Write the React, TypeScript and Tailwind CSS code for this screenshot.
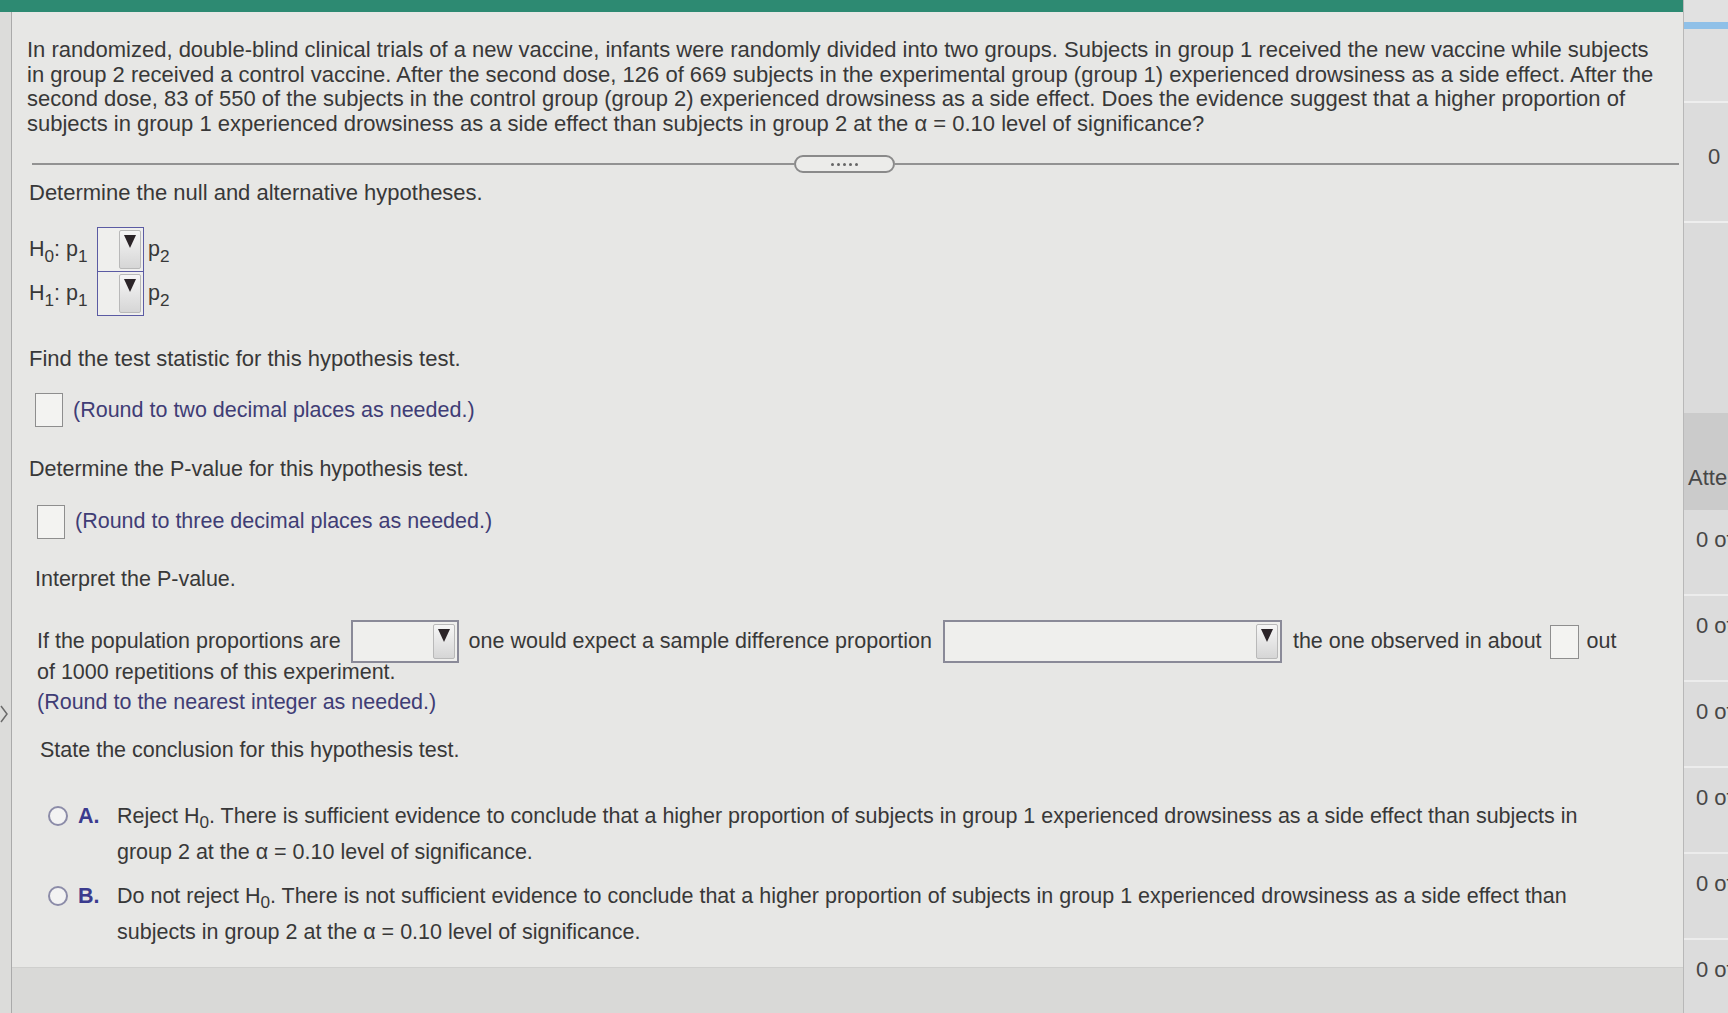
const font = "font-['Liberation_Sans',Arial,sans-serif]";

function Caret() {
  return (
    <svg width="12" height="13" viewBox="0 0 12 13" className="block">
      <polygon points="0,0 12,0 6,13" fill="#2b2428" />
    </svg>
  );
}

function Dropdown({ width, height, border }: { width: string; height: string; border: string }) {
  return (
    <div className={`${width} ${height} ${border} flex justify-end items-stretch bg-[#efefed] p-[2px] shrink-0`}>
      <div className="w-[22px] flex justify-center pt-[4px] bg-gradient-to-b from-[#f6f6f6] to-[#d6d6d6] border border-[#b9b9b9] rounded-[2px]">
        <Caret />
      </div>
    </div>
  );
}

function AnswerBox({ className = '' }: { className?: string }) {
  return <div className={`w-[28px] h-[34px] border border-[#8e8e8e] bg-[#f3f3f1] shrink-0 ${className}`} />;
}

function Option({ letter, children }: { letter: string; children: React.ReactNode }) {
  return (
    <div className="flex items-start">
      <div className="h-[36px] flex items-center">
        <div className="w-[20px] h-[20px] rounded-full border-2 border-[#8c8ca8] bg-[#f3f3f3]" />
      </div>
      <div className="w-[39px] ml-[10px] font-bold text-[#3b3b8e] leading-[36px]">{letter}.</div>
      <div className="w-[1490px] leading-[36px]">{children}</div>
    </div>
  );
}

const Sub = ({ children }: { children: React.ReactNode }) => (
  <sub className="text-[80%] -bottom-[0.3em]">{children}</sub>
);

const H0 = () => (
  <>
    H<Sub>0</Sub>
  </>
);

const sideRows = ['0 of 1', '0 of 1', '0 of 1', '0 of 1', '0 of 1', '0 of 1'];

export default function App() {
  return (
    <div className={`w-[1728px] h-[1013px] flex overflow-hidden bg-[#e7e7e5] text-[#383838] text-[21.5px] ${font}`}>
      {/* question panel */}
      <div className="w-[1684px] flex flex-col border-r border-[#b8b8b8]">
        <div className="h-[12px] bg-[#2d8a72] shrink-0" />
        <div className="flex flex-1 relative">
          <div className="w-[12px] bg-[#dcdcda] border-r border-[#aaaaaa] shrink-0" />
          <svg className="absolute left-[0px] top-[692px]" width="8" height="20" viewBox="0 0 8 20">
            <polyline points="1,2 7,10 1,18" fill="none" stroke="#6b6b6b" strokeWidth="1.5" />
          </svg>

          <div className="flex-1 flex flex-col">
            <p className="pt-[26px] pl-[15px] text-[22px] leading-[24.5px] whitespace-nowrap">
              In randomized, double-blind clinical trials of a new vaccine, infants were randomly divided into two
              groups. Subjects in group 1 received the new vaccine while subjects
              <br />
              in group 2 received a control vaccine. After the second dose, 126 of 669 subjects in the experimental
              group (group 1) experienced drowsiness as a side effect. After the
              <br />
              second dose, 83 of 550 of the subjects in the control group (group 2) experienced drowsiness as a side
              effect. Does the evidence suggest that a higher proportion of
              <br />
              subjects in group 1 experienced drowsiness as a side effect than subjects in group 2 at the α = 0.10
              level of significance?
            </p>

            <div className="mt-[19px] ml-[20px] mr-[4px] h-[18px] flex items-center">
              <div className="w-[762px] border-t-2 border-[#929292]" />
              <div className="w-[101px] h-[18px] rounded-full border-2 border-[#8a8a8a] bg-[#ececea] flex items-center justify-center gap-[3px]">
                <span className="w-[3px] h-[3px] rounded-full bg-[#666]" />
                <span className="w-[3px] h-[3px] rounded-full bg-[#666]" />
                <span className="w-[3px] h-[3px] rounded-full bg-[#666]" />
                <span className="w-[3px] h-[3px] rounded-full bg-[#666]" />
                <span className="w-[3px] h-[3px] rounded-full bg-[#666]" />
              </div>
              <div className="flex-1 border-t-2 border-[#929292]" />
            </div>

            <div className="pl-[17px]">
              <div className="mt-[8px] text-[22px] leading-[24.5px]">Determine the null and alternative hypotheses.</div>

              <div className="mt-[22px] flex flex-col">
                <div className="h-[44px] flex items-center">
                  <span className="w-[68px]">
                    <H0 />: p<Sub>1</Sub>
                  </span>
                  <Dropdown width="w-[47px]" height="h-[45px]" border="border border-[#5b5ba3]" />
                  <span className="ml-[4px]">
                    p<Sub>2</Sub>
                  </span>
                </div>
                <div className="h-[44px] flex items-center">
                  <span className="w-[68px]">
                    H<Sub>1</Sub>: p<Sub>1</Sub>
                  </span>
                  <Dropdown width="w-[47px]" height="h-[45px]" border="border border-[#5b5ba3]" />
                  <span className="ml-[4px]">
                    p<Sub>2</Sub>
                  </span>
                </div>
              </div>

              <div className="mt-[31px] text-[22px] leading-[24.5px]">Find the test statistic for this hypothesis test.</div>
              <div className="mt-[22px] h-[34px] flex items-center">
                <AnswerBox className="ml-[6px]" />
                <span className="ml-[10px] text-[#3f3d75]">(Round to two decimal places as needed.)</span>
              </div>

              <div className="mt-[30px] leading-[24.5px]">Determine the P-value for this hypothesis test.</div>
              <div className="mt-[23px] h-[34px] flex items-center">
                <AnswerBox className="ml-[8px]" />
                <span className="ml-[10px] text-[#3f3d75]">(Round to three decimal places as needed.)</span>
              </div>

              <div className="mt-[28px] ml-[6px] leading-[24.5px]">Interpret the P-value.</div>

              <div className="ml-[8px]">
                <div className="mt-[29px] h-[43px] flex items-center whitespace-nowrap">
                  <span>If the population proportions are</span>
                  <div className="mx-[10px]">
                    <Dropdown width="w-[108px]" height="h-[43px]" border="border-2 border-[#8a8a98]" />
                  </div>
                  <span>one would expect a sample difference proportion</span>
                  <div className="mx-[11px]">
                    <Dropdown width="w-[339px]" height="h-[43px]" border="border-2 border-[#8a8a98]" />
                  </div>
                  <span>the one observed in about</span>
                  <AnswerBox className="mx-[8px] w-[29px]" />
                  <span>out</span>
                </div>
                <div className="-mt-[3px] leading-[24.5px]">of 1000 repetitions of this experiment.</div>
                <div className="mt-[5px] leading-[24.5px] text-[#3f3d75]">(Round to the nearest integer as needed.)</div>

                <div className="mt-[24px] ml-[3px] leading-[24.5px]">State the conclusion for this hypothesis test.</div>
              </div>

              <div className="mt-[35px] ml-[19px] flex flex-col gap-[8px]">
                <Option letter="A">
                  Reject <H0 />. There is sufficient evidence to conclude that a higher proportion of subjects in group
                  1 experienced drowsiness as a side effect than subjects in group 2 at the α = 0.10 level of
                  significance.
                </Option>
                <Option letter="B">
                  Do not reject <H0 />. There is not sufficient evidence to conclude that a higher proportion of
                  subjects in group 1 experienced drowsiness as a side effect than subjects in group 2 at the α = 0.10
                  level of significance.
                </Option>
              </div>
            </div>

            <div className="mt-auto h-[46px] bg-[#d9d9d7] border-t border-[#cfcfcd]" />
          </div>
        </div>
      </div>

      {/* score sidebar */}
      <div className="flex-1 flex flex-col overflow-hidden whitespace-nowrap bg-[#dcdcdc] text-[#474747] text-[22px] leading-[24px]">
        <div className="h-[22px] bg-[#e1e1e1] shrink-0" />
        <div className="h-[7px] bg-[#8fc0e8] shrink-0" />
        <div className="h-[74px] bg-[#dfdfdf] border-b-2 border-[#eeeeee] shrink-0" />
        <div className="h-[120px] pt-[42px] pl-[24px] border-b-2 border-[#eeeeee] shrink-0">0</div>
        <div className="h-[190px] bg-[#dbdbdb] shrink-0" />
        <div className="h-[97px] pt-[53px] pl-[4px] bg-[#cbcbcb] shrink-0">Attempts</div>
        {sideRows.map((t, i) => (
          <div key={i} className="h-[86px] pt-[18px] pl-[12px] border-b-2 border-[#ececec] shrink-0">
            {t}
          </div>
        ))}
      </div>
    </div>
  );
}
